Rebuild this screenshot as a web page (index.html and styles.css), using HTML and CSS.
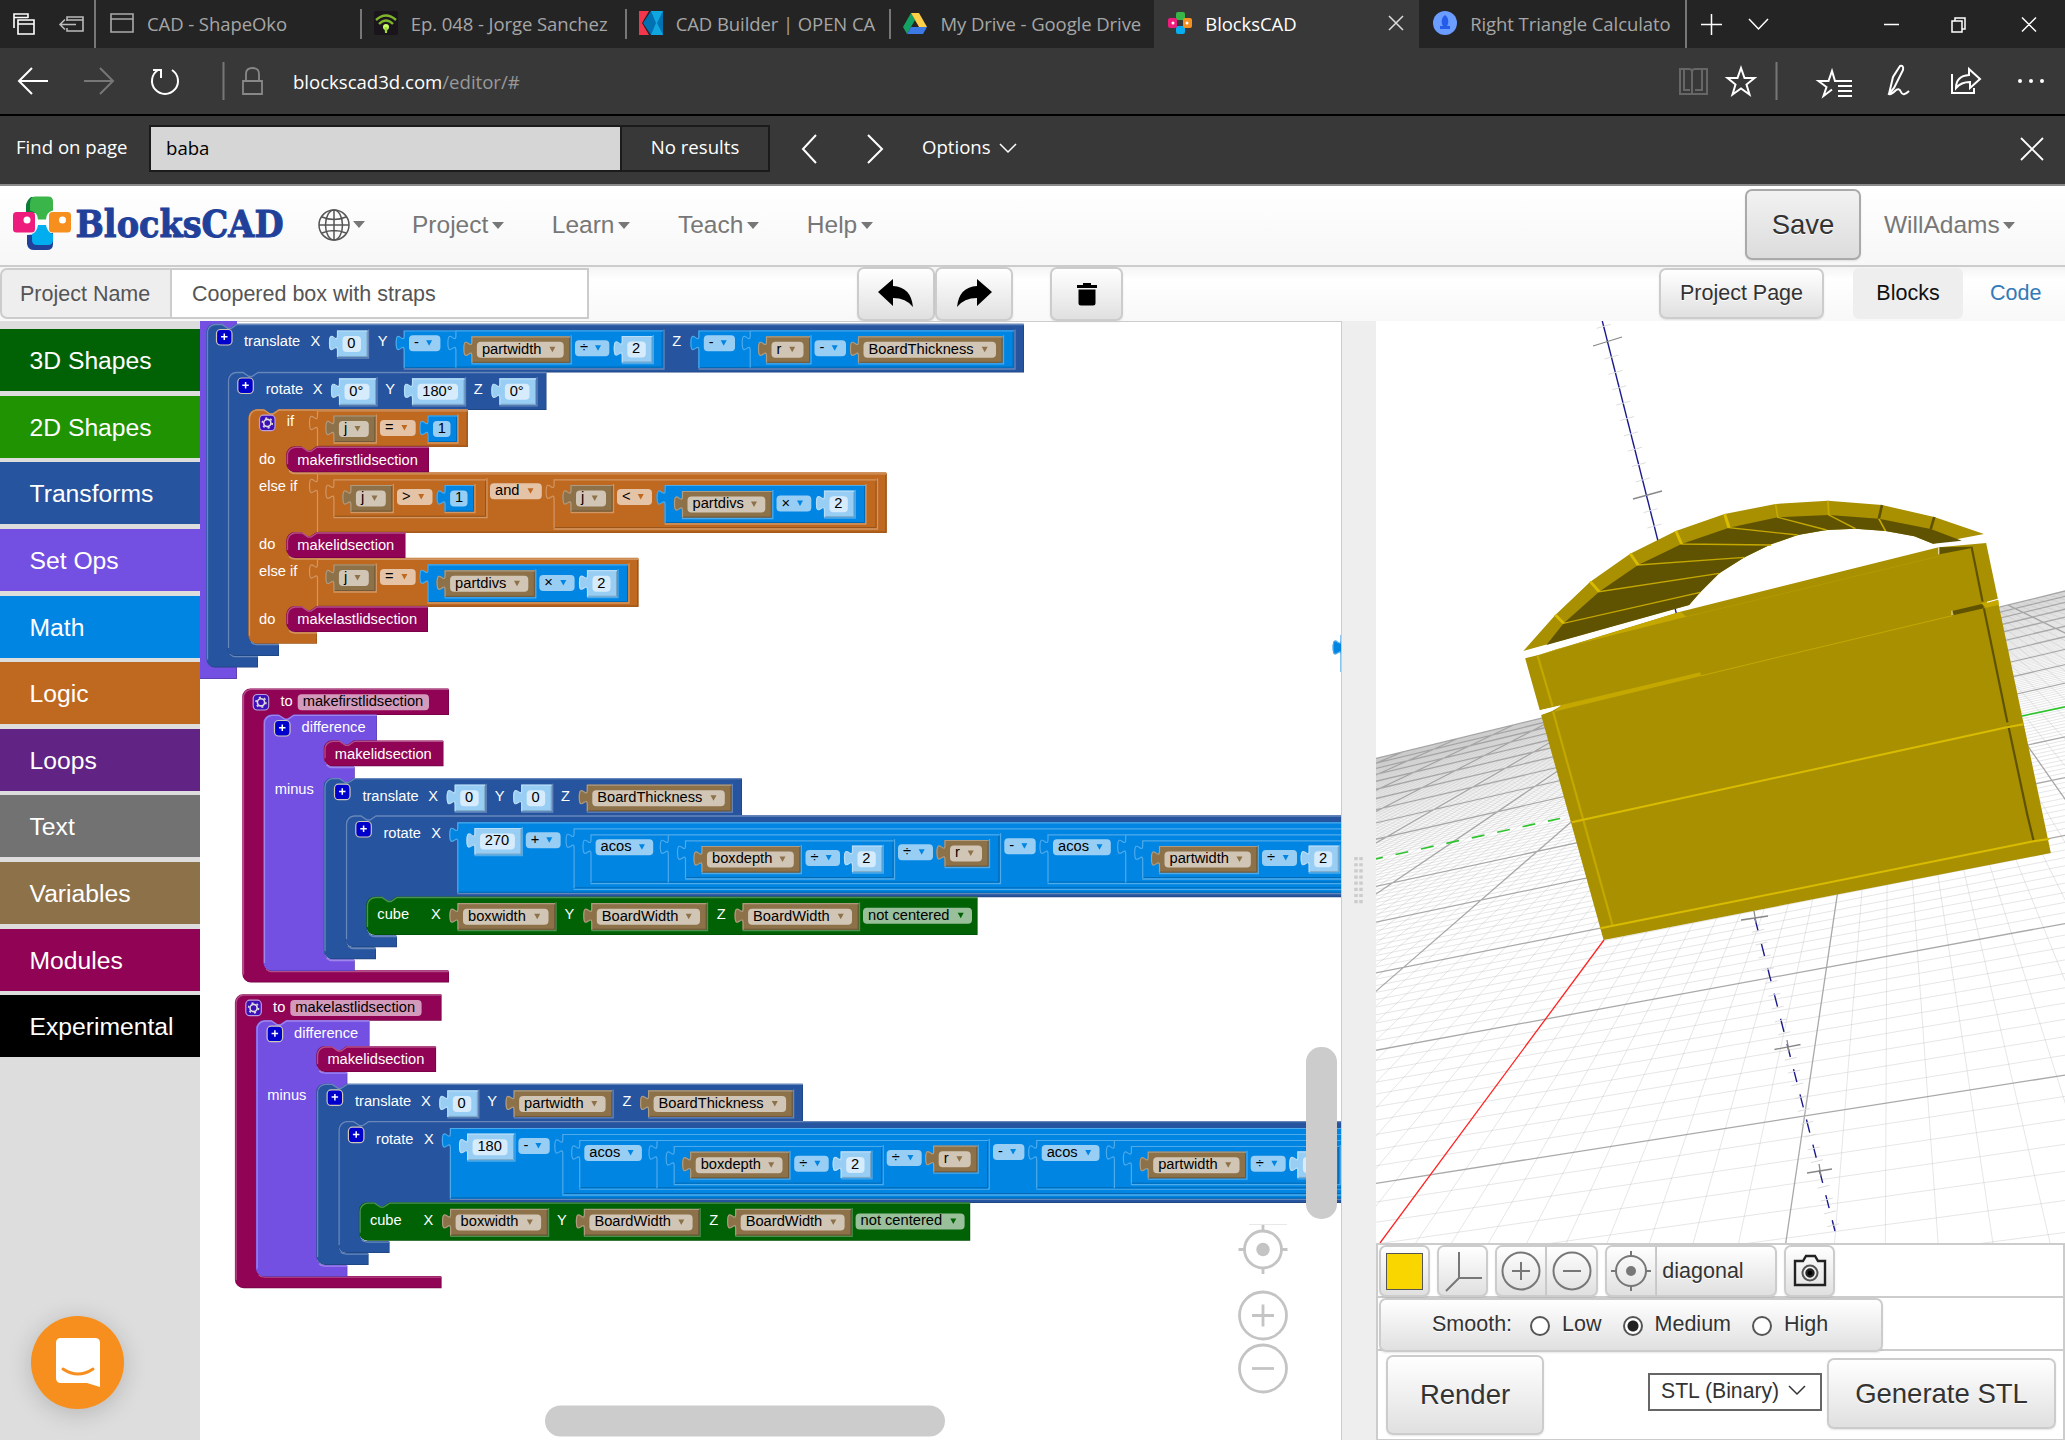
FILE: index.html
```html
<!DOCTYPE html>
<html lang="en">
<head>
<meta charset="utf-8">
<title>BlocksCAD</title>
<link rel="stylesheet" href="styles.css">
</head>
<body>
<div class="tabs">
  <div class="tab-tools">
    <svg width="95" height="48" fill="none" stroke="#fff" stroke-width="1.6"><path d="M14 28V14h14v4M14 17.500h14M18 20h16v14H18zM18 24h16" /><path d="M67 21v-4h16v14H67v-3M67 20h16M76 24.500H60m5-5l-5 5 5 5" stroke="#bbb"/></svg>
  </div>
  <div class="tab"><svg class="fav" viewBox="0 0 24 24" fill="none" stroke="#aaa" stroke-width="1.6"><path d="M1 3h22v18H1zM1 8h22"/></svg><span>CAD - ShapeOko</span></div>
  <div class="tab sep"><svg class="fav" viewBox="0 0 24 24"><rect width="24" height="24" rx="2" fill="#1a141c"/><g fill="none" stroke="#7fb52a" stroke-width="2.400"><path d="M2 9q10-9 20 0M5 13q7-7 14 0"/></g><circle cx="12" cy="16" r="3" fill="#cf6"/><path d="M10.500 16h3l-.5 6h-2z" fill="#9d3"/></svg><span>Ep. 048 - Jorge Sanchez</span></div>
  <div class="tab sep"><svg class="fav" viewBox="0 0 24 24"><path d="M0 0h10L3 12l7 12H0z" fill="#f4364c"/><path d="M12 0h12v24H12L4 12z" fill="#0071b3"/><path d="M12 0h12L18 12l6 12H12l5-12z" fill="#10a7e0"/></svg><span>CAD Builder | OPEN CA</span></div>
  <div class="tab sep"><svg class="fav" viewBox="0 0 24 24"><path d="M8 2L0 16l4 7 8-14z" fill="#13a261"/><path d="M8 2h8l8 14h-8z" fill="#ffcf48"/><path d="M8 16h16l-4 7H4z" fill="#3c78e6"/></svg><span>My Drive - Google Drive</span></div>
  <div class="tab active"><svg class="fav" viewBox="0 0 24 24"><rect x="8" y="1" width="9" height="8" rx="2" fill="#3ab54a"/><rect x="8" y="15" width="9" height="8" rx="2" fill="#08aef0"/><rect y="7" width="9" height="10" rx="2" fill="#ee1c7c"/><rect x="15" y="7" width="9" height="10" rx="2" fill="#f78f1e"/><circle cx="5" cy="12" r="1.500" fill="#fff"/><circle cx="19" cy="12" r="1.500" fill="#fff"/></svg><span>BlocksCAD</span><svg class="tab-x" viewBox="0 0 16 16" stroke="#ddd" stroke-width="1.500"><path d="M1 1l14 14M15 1L1 15"/></svg></div>
  <div class="tab"><svg class="fav" viewBox="0 0 24 24"><circle cx="12" cy="12" r="12" fill="#6b9cff"/><path d="M12 4c4 3 4 8 2 11h3v3H7v-3h3C8 12 8 7 12 4z" fill="#245be8"/></svg><span>Right Triangle Calculato</span></div>
  <div class="tab-end">
    <svg width="378" height="48" fill="none" stroke="#fff" stroke-width="1.500"><path d="M14 24.500h21M24.500 14v21M62 19l9.500 10 9.500-10M197 24.500h15M265 21h10v11h-10zM268 21v-3h10v11h-3M335 17.500l14 14M349 17.500l-14 14"/></svg>
  </div>
</div>
<div class="address">
  <svg class="nav-left" width="280" height="66" fill="none" stroke="#fff" stroke-width="2"><path d="M48 33H19M32 20L19 33l13 13"/><path d="M84 33h29M100 20l13 13-13 13" stroke="#777"/><path d="M158 22a13 13 0 1 0 14 0M153 22h8v8"/><path d="M223.500 14v38" stroke="#777"/><path d="M243 33h19v13h-19zM246 33v-7q0-6 6.500-6t6.500 6v7" stroke="#888" stroke-width="1.800"/></svg>
  <div class="url">blockscad3d.com<span>/editor/#</span></div>
  <svg class="nav-right" width="400" height="66" fill="none" stroke="#fff" stroke-width="2"><path d="M15 21h9q3 0 3 3 0-3 3-3h12v25H15zM27 24v22M19 21v21h6M37 21v21h-7" stroke="#666"/><path d="M76 20l3.500 10h10l-8 6.500 3 10-8.500-6-8.500 6 3-10-8-6.500h10z"/><path d="M111.500 14v38" stroke="#777"/><path transform="translate(3 0)" d="M180 33h-13l-3-10-3.500 10h-10l8 6-3 9 8.500-6.500M170 38h14M170 43h14M170 48h14M168 33h16"/><path transform="translate(6 0)" d="M218 46l4-17 7-11q4-1 3 4l-9 18-5 6q2 1 6-3t6 1 8-1"/><path transform="translate(4 0)" d="M283 26v19h22v-5M287 40q0-12 13-13v-6l11 10-10 9v-6q-9 0-14 6z"/><g fill="#fff" stroke="none" transform="translate(5 0)"><circle cx="350" cy="33" r="2"/><circle cx="361" cy="33" r="2"/><circle cx="372" cy="33" r="2"/></g></svg>
</div>
<div class="find">
  <span class="find-label">Find on page</span>
  <div class="find-input">baba</div>
  <div class="find-result">No results</div>
  <svg width="152" height="66" fill="none" stroke="#fff" stroke-width="2"><path d="M46 19L33 33l13 14M98 19l14 14-14 14"/></svg>
  <span class="find-options">Options</span>
  <svg width="20" height="12" fill="none" stroke="#fff" stroke-width="1.500"><path d="M1 1l8 8 8-8"/></svg>
  <svg class="find-close" width="24" height="24" stroke="#fff" stroke-width="1.800"><path d="M1 1l22 22M23 1L1 23"/></svg>
</div>

<header class="header">
  <svg class="logo" width="300" height="79" viewBox="0 0 300 79">
    <path d="M31 12q-5 4-5 9v7h10V12z" fill="#0b7a3b"/>
    <path d="M27 50v9q1 6 7 6h13q6 0 6-6V48z" fill="#21409a"/>
    <path d="M35 11.500h13q5 0 5 5v9q-7 2-7 9h-8q0-7-8-9v-7q0-7 5-7z" fill="#3ab54a"/>
    <path d="M38 40h8q1 7 7 9v6q0 5-5 5H37q-5 0-5-5v-6q5-2 6-9z" fill="#00aeef"/>
    <rect x="13" y="27" width="22" height="20.500" rx="3.500" fill="#ee1c7c"/><rect x="49" y="27" width="22" height="20.500" rx="3.500" fill="#f78f1e"/>
    <circle cx="27" cy="35" r="3.500" fill="#fff"/><circle cx="62.500" cy="35" r="3.500" fill="#fff"/>
    <text class="logo-text" x="75.500" y="51.500" textLength="208" lengthAdjust="spacingAndGlyphs">BlocksCAD</text>
  </svg>
  <svg class="globe" width="32" height="32" fill="none" stroke="#555" stroke-width="1.500"><circle cx="16" cy="16" r="15"/><ellipse cx="16" cy="16" rx="8.500" ry="15"/><path d="M16 1v30M1 16h30M4 8q12 5 24 0M4 24q12-5 24 0"/></svg><i class="caret"></i>
  <div class="menu m1">Project<i class="caret"></i></div>
  <div class="menu m2">Learn<i class="caret"></i></div>
  <div class="menu m2">Teach<i class="caret"></i></div>
  <div class="menu m2">Help<i class="caret"></i></div>
  <button class="btn save">Save</button>
  <div class="menu user">WillAdams<i class="caret"></i></div>
</header>
<div class="subbar">
  <div class="pn-label">Project Name</div><div class="pn-input">Coopered box with straps</div>
  <button class="btn undo"><svg width="40" height="32" viewBox="0 0 40 32"><path d="M2 14L17 1v7q18 1 20 21-7-9-20-9v8z"/></svg></button>
  <button class="btn redo"><svg width="40" height="32" viewBox="0 0 40 32"><path d="M38 14L23 1v7Q5 9 3 29q7-9 20-9v8z"/></svg></button>
  <button class="btn trash"><svg width="20" height="24" viewBox="0 0 20 24"><path d="M0 3h6V1h8v2h6v3H0zM1.500 7.500h17V21q0 2.500-2.500 2.500H4Q1.500 23.500 1.500 21z"/></svg></button>
  <button class="btn page">Project Page</button>
  <div class="pill">Blocks</div><div class="code">Code</div>
</div>

<main class="main">
  <aside class="toolbox">
    <div class="cat c-3d">3D Shapes</div><div class="cat c-2d">2D Shapes</div><div class="cat c-tr">Transforms</div><div class="cat c-set">Set Ops</div><div class="cat c-math">Math</div><div class="cat c-logic">Logic</div><div class="cat c-loops">Loops</div><div class="cat c-text">Text</div><div class="cat c-var">Variables</div><div class="cat c-mod">Modules</div><div class="cat c-exp">Experimental</div>
    <div class="chat"><svg width="44" height="50" viewBox="0 0 44 50"><path d="M5 0h34q5 0 5 5v44l-13-4H5q-5 0-5-5V5q0-5 5-5z" fill="#fff"/><path d="M7 31q15 10 30 0" fill="none" stroke="#f78f1e" stroke-width="3" stroke-linecap="round"/></svg></div>
  </aside>
  <svg id="workspace" class="workspace" width="1141" height="1119" viewBox="200 321 1141 1119"></svg>
  <div class="splitter"><svg width="10" height="48" viewBox="0 0 10 48" fill="none" stroke="#ccc" stroke-width="3.500" stroke-dasharray="3.200 2.950"><path d="M2 0v48M7 0v48"/></svg></div>
  <section class="viewer">
    <svg id="scene" class="scene" width="689" height="922" viewBox="1376 321 689 922"></svg>
    <div class="row tools">
      <button class="btn sq"><i class="swatch"></i></button>
      <button class="btn sq g7"><svg width="40" height="44" fill="none" stroke="#777" stroke-width="2"><path d="M16 3v26h23M16 29L3 42"/></svg></button>
      <button class="btn sq g7 l"><svg width="40" height="40" fill="none" stroke="#777" stroke-width="2"><circle cx="20" cy="20" r="18.500"/><path d="M11 20h18M20 11v18"/></svg></button>
      <button class="btn sq r"><svg width="40" height="40" fill="none" stroke="#777" stroke-width="2"><circle cx="20" cy="20" r="18.500"/><path d="M11 20h18"/></svg></button>
      <button class="btn sq g7 l"><svg width="40" height="40" fill="none" stroke="#777" stroke-width="2"><circle cx="20" cy="20" r="15"/><path d="M0 20h6M34 20h6M20 0v6M20 34v6"/><circle cx="20" cy="20" r="5" fill="#777" stroke="none"/></svg></button>
      <button class="btn diag r">diagonal</button>
      <button class="btn sq g7"><svg width="34" height="34" viewBox="0 0 34 34" fill="none" stroke="#222" stroke-width="2.400"><path d="M2 7h8l3-5h9l3 5h7v24H2z"/><circle cx="17" cy="19" r="7.500" stroke="#555" stroke-width="2"/><circle cx="17" cy="19" r="3.500" fill="#000"/></svg></button>
    </div>
    <div class="row smooth-row">
      <div class="btn smooth"><span>Smooth:</span><i class="radio"></i><span>Low</span><i class="radio on"></i><span>Medium</span><i class="radio"></i><span>High</span></div>
    </div>
    <div class="row bottom">
      <button class="btn render">Render</button>
      <div class="select">STL (Binary)<svg width="18" height="12" fill="none" stroke="#333" stroke-width="1.500"><path d="M1 1l8 8 8-8"/></svg></div>
      <button class="btn gen">Generate STL</button>
    </div>
  </section>
</main>
<script src="app.js"></script>
</body>
</html>
```
FILE: styles.css
```css
* { box-sizing: border-box; }
body { margin: 0; width: 2065px; height: 1440px; overflow: hidden; background: #fff; font-family: "Liberation Sans", Arial, sans-serif; font-size: 21.5px; color: #333; }
svg { display: block; flex: none; }
button { font-family: inherit; cursor: pointer; }

.tabs { display: flex; height: 48px; background: #242424; font-family: "Open Sans", sans-serif; font-size: 18.5px; color: #a6a6a6; letter-spacing: -.08px; }
.tab-tools { width: 96px; border-right: 2px solid #777; }
.tab { position: relative; display: flex; align-items: center; width: 265px; padding: 0 0 2px 14px; gap: 13px; }
.tab span { width: 201px; overflow: hidden; white-space: nowrap; }
.tab.sep { background: linear-gradient(#777, #777) 0 9px / 2px 30px no-repeat; }
.tab:nth-child(2) { width: 264px; }
.tab.active { background: #383838; color: #fff; width: 265px; }
.tab.active span { width: 182px; }
.tab.active + .tab { width: 266px; }
.tab-x { width: 16px; height: 16px; margin-left: -12px; }
.fav { width: 24px; height: 24px; }
.tab-end { flex: 1; border-left: 2px solid #777; }

.address { display: flex; align-items: center; height: 68px; background: #383838; border-bottom: 2px solid #000; font-family: "Open Sans", sans-serif; font-size: 18.6px; color: #fff; letter-spacing: -.02px; }
.url { padding-left: 13px; }
.url span { color: #999; }
.nav-right { margin-left: auto; }
.find { display: flex; align-items: center; height: 70px; padding-bottom: 3px; background: #383838; border-bottom: 2px solid #8a8a8a; box-shadow: 0 2px 0 #e8e8e8; font-family: "Open Sans", sans-serif; font-size: 18.6px; color: #fff; }
.find-label { width: 149px; padding: 0 0 4px 16px; }
.find-input { width: 473px; height: 47px; border: 2px solid #1b1b1b; background: #d6d6d6; color: #000; line-height: 42px; padding-left: 15px; }
.find-result { width: 148px; height: 47px; border: 2px solid #1b1b1b; border-left: 0; line-height: 39px; text-align: center; }
.find-options { width: 77px; padding-bottom: 4px; }
.find-close { margin-left: auto; margin-right: 21px; }

.header { display: flex; align-items: center; height: 81px; padding-bottom: 2px; border-bottom: 2px solid #ccc; background: linear-gradient(#fff, #f7f7f7); font-size: 24.5px; color: #777; }
.logo { overflow: visible; }
.logo-text { font: bold 38px "DejaVu Serif", serif; fill: #21409a; stroke: #21409a; stroke-width: 1; }
.globe { margin-left: 18px; }
.caret { display: inline-block; margin-left: 3px; border: 6px solid transparent; border-top: 7px solid #777; border-bottom: 0; vertical-align: 4px; }
.m1 { margin-left: 47px; }
.m1 .caret, .m2 .caret { margin-left: 4px; }
.m2 { margin-left: 47.500px; }
.btn { display: flex; align-items: center; justify-content: center; border: 2px solid #ccc; border-radius: 7px; background: linear-gradient(#fff, #e0e0e0); color: #333; font-size: 21.5px; text-shadow: 0 1px 0 #fff; box-shadow: 0 1px 2px rgba(0,0,0,.1); padding: 0; white-space: nowrap; }
.save { width: 116px; height: 71px; margin-left: auto; font-size: 27.5px; border-color: #aaa; background: linear-gradient(#f2f2f2, #dcdcdc); }
.user { margin-left: 23px; width: 181px; }

.subbar { display: flex; align-items: center; height: 54px; padding-bottom: 1px; background: linear-gradient(#f4f4f4, #fff 12px, #f8f8f8); }
.pn-label { width: 172px; height: 51px; border: 2px solid #ccc; border-radius: 7px 0 0 7px; background: #eee; line-height: 48px; padding-left: 18px; color: #555; }
.pn-input { width: 417px; height: 51px; border: 2px solid #ccc; border-left: 0; background: #fff; line-height: 48px; padding-left: 20px; color: #555; }
.undo, .redo { width: 78px; height: 54px; }
.undo { margin-left: 268px; }
.trash { width: 73px; height: 54px; margin-left: 37px; }
.page { width: 165px; height: 51px; margin-left: 536px; }
.pill { width: 110px; height: 51px; margin-left: 29px; border-radius: 6px; background: #eee; line-height: 51px; text-align: center; color: #111; }
.code { margin-left: 27px; color: #337ab7; }

.main { display: flex; height: 1119px; }
.toolbox { position: relative; width: 200px; padding-top: 8px; display: flex; flex-direction: column; gap: 4.65px; background: #ddd; }
.cat { height: 62px; line-height: 64px; padding-left: 29.5px; color: #fff; font-size: 24.7px; flex: none; }
.c-3d { background: #006205; } .c-2d { background: #209303; } .c-tr { background: #26549e; } .c-set { background: #7450e2; }
.c-math { background: #0185e3; } .c-logic { background: #bf6920; } .c-loops { background: #612485; } .c-text { background: #727272; }
.c-var { background: #8d7149; } .c-mod { background: #900355; } .c-exp { background: #000; }
.chat { position: absolute; left: 31px; top: 995px; width: 93px; height: 93px; border-radius: 50%; background: #f78f1e; display: flex; align-items: center; justify-content: center; box-shadow: 0 4px 24px rgba(0,0,0,.18); }
.workspace text { font-size: 14.67px; }
.splitter { width: 35px; border-left: 1px solid #ccc; background: #eee; display: flex; align-items: center; justify-content: center; }
.viewer { width: 689px; }
.scene { background: #fff; }
.row { display: flex; border: 2px solid #ccc; }
.tools { height: 55px; padding: 0 1px; }
.sq { width: 51px; height: 52px; }
.g7 { margin-left: 7px; }
.btn.l { border-radius: 7px 0 0 7px; width: 52px; }
.btn.r { border-radius: 0 7px 7px 0; border-left: 0; }
.diag { width: 120px; padding-right: 26px; height: 52px; }
.swatch { width: 37px; height: 37px; background: #f9d600; border: 1.500px solid #555; }
.smooth-row { height: 53px; border-top: 0; padding: 0 1px; }
.smooth { width: 504px; height: 54px; justify-content: flex-start; padding: 0 0 2px 51px; }
.radio { width: 20px; height: 20px; margin: 3px 12px 0 18px; border: 2px solid #555; border-radius: 50%; background: #fff; flex: none; }
.radio:nth-of-type(n+2) { margin-left: 21px; }
.radio.on { background: radial-gradient(#222 0 5px, #fff 6px); }
.bottom { height: 89px; border-top: 0; border-bottom-width: 1px; padding: 4px 6px; align-items: flex-start; }
.render { width: 158px; height: 80px; font-size: 27.5px; margin-left: 2px; }
.select { display: flex; align-items: center; gap: 9px; width: 174px; height: 38px; margin: 18px 0 0 104px; padding-bottom: 3px; border: 2px solid #666; background: #fff; padding-left: 11px; white-space: nowrap; font-size: 21.2px; }
.gen { width: 229px; height: 71px; font-size: 27.5px; margin: 3px 0 0 5px; }
```
FILE: app.js
```js
const C = { green: '#006205', blue: '#26549e', set: '#7450e2', math: '#0185e3', logic: '#bf6920', vars: '#8d7149', mod: '#900355', num: '#99cef4' };
const mix = (c, t, k) => '#' + [1, 3, 5].map(i => Math.round(parseInt(c.substr(i, 2), 16) * (1 - k) + t * k).toString(16).padStart(2, '0')).join('');
const light = c => mix(c, 255, .3), dark = c => mix(c, 0, .2), field = c => mix(c, 255, .6);
let out = [];
const add = s => out.push(s);

const text = (x, y, s, c = '#fff') => add(`<text x="${x}" y="${y - .4}" fill="${c}">${s}</text>`);

/* Value block: body with a puzzle tab on its left; o is the parent's colour. */
function val(x, y, r, b, c, o) {
  const tab = `V${y + 20}c0,-10 -8,8 -8,-7.5s8,2.5 8,-7.5`;
  const body = `M${x} ${y}H${r}V${b}H${x}${tab}Z`;
  if (o) add(`<path d="M${x} ${b + 1}H${r + 1}V${y - 1}" fill="none" stroke="${light(o)}" stroke-width="1.3"/>`);
  add(`<path d="${body}" fill="${c}"/><path d="M${x + 1} ${b - .5}H${r - .5}V${y + 1}" fill="none" stroke="${dark(c)}"/>`);
  add(`<path d="M${x + .5} ${b}${tab}V${y + .5}H${r}" fill="none" stroke="${light(c)}" stroke-width="1.2"/>`);
}
function box(x, y, r, s, c, cx, h = 16) {
  add(`<rect x="${x}" y="${y}" width="${r - x}" height="${h}" rx="4" fill="${field(c)}"/>`);
  text(cx ?? x + 5, y + 12.3, s, '#000');
}
function drop(x, y, r, s, c) {
  box(x, y, r, s, c);
  const a = r - 11.3, t = y + 5;
  add(`<path d="M${a - 3} ${t}h6l-3 5.500z" fill="${c}"/>`);
}
function variable(x, y, r, s, o = C.math) {
  val(x, y, r, y + 26.5, C.vars, o);
  drop(x + 5.5, y + 5.5, r - 6.5, s, C.vars);
}
function num(x, y, r, s, c = C.num, o = C.math) {
  val(x, y, r, y + 26.5, c, o);
  add(`<rect x="${x + 5.5}" y="${y + 5.5}" width="${r - x - 12}" height="16" rx="4" fill="${field(c)}"/>`);
  text(x + 10.3, y + 17.8, s, '#000');
}
/* Statement block. rows: {r,b} plain row, {s,b} statement mouth starting at x=s. */
function stmt(x, y, rows, c, notch = true) {
  const top = `A8 8 0 0 1 ${x + 8} ${y}` + (notch ? `H${x + 15}l6 4h3l6-4` : '') + `H${rows[0].r}`;
  const end = rows[rows.length - 1].b;
  let d = `M${x} ${y + 8}${top}V${rows[0].b}`, hl = '';
  for (let i = 1; i < rows.length; i++) {
    const q = rows[i];
    if (q.s) {
      d += `H${q.s + 30}l-6 5h-3l-6-5H${q.s + 8}a8 8 0 0 0 -8 8V${q.b - 8}a8 8 0 0 0 8 8`;
      hl += `M${q.s + 2} ${q.b - 2}a8 8 0 0 0 6 2.5H${rows[i + 1].r}`;
    } else d += `H${q.r}V${q.b}`;
  }
  d += `H${x + 8}a8 8 0 0 1 -8-8Z`;
  add(`<path d="${d}" fill="${dark(c)}"/><path d="${d}" fill="${c}" transform="translate(-.7 -.7)"/>`);
  add(`<path d="M${x + .5} ${end - 8}V${y + 8}${top}${hl}" fill="none" stroke="${light(c)}" stroke-width="1.3"/>`);
}
function icon(x, y, gear) {
  add(`<rect x="${x + .5}" y="${y + .5}" width="15.500" height="15.500" rx="4" fill="${gear ? '#3d0fb8' : '#00c'}" stroke="${gear ? '#b9a0dc' : '#cfc8b8'}" stroke-width="1.200"/>`);
  add(gear ? `<circle cx="${x + 8.3}" cy="${y + 8.3}" r="3.600" fill="none" stroke="#ddd" stroke-width="1.600"/><circle cx="${x + 8.3}" cy="${y + 8.3}" r="5" fill="none" stroke="#ddd" stroke-width="1.500" stroke-dasharray="2 3.200"/>`
    : `<path d="M${x + 8.3} ${y + 4.5}v6.500M${x + 5} ${y + 7.700}h6.500" stroke="#fff" stroke-width="1.500"/>`);
}
function call(x, y, r, s) { stmt(x, y, [{ r, b: y + 25 }], C.mod); text(x + 10.3, y + 17.8, s); }

/* First stack */
add(`<path d="M200 321h37v358h-37z" fill="${C.set}"/><path d="M200 678.500h36.500V668" fill="none" stroke="${dark(C.set)}"/>`);
stmt(207, 324.5, [{ r: 1024, b: 372.5 }, { s: 228, b: 656 }, { r: 258, b: 667.5 }], C.blue);
icon(216, 329); text(244, 346.7, 'translate'); text(310.5, 346.7, 'X'); text(377.7, 346.7, 'Y'); text(672.3, 346.7, 'Z');
num(337, 330.5, 367.5, '0', C.num, C.blue);
val(403.7, 330.5, 663, 368, C.math, C.blue); drop(409, 335.3, 440.4, '-', C.math);
val(455.4, 330.5, 662.5, 367.5, C.math);
variable(471.4, 336.3, 570.2, 'partwidth'); drop(575, 340.3, 609.3, '÷', C.math); num(621.8, 336, 652.3, '2');
val(698.4, 330.5, 1014, 368, C.math, C.blue); drop(703.8, 335.3, 735, '-', C.math);
val(749.7, 330.5, 1013.5, 367.5, C.math);
variable(766, 336.3, 810, 'r'); drop(814.5, 340.3, 846, '-', C.math); variable(858, 336.3, 1002.5, 'BoardThickness');

stmt(228, 372.5, [{ r: 546.5, b: 410 }, { s: 249, b: 644 }, { r: 279, b: 656 }], C.blue);
icon(237.3, 377.5); text(265.7, 394.7, 'rotate'); text(312.7, 394.7, 'X'); text(385.2, 394.7, 'Y'); text(473.8, 394.7, 'Z');
num(339, 378.3, 376, '0°', C.num, C.blue); num(412, 378.3, 464.5, '180°', C.num, C.blue); num(499.4, 378.3, 536, '0°', C.num, C.blue);

stmt(249, 410, [{ r: 468, b: 447 }, { s: 287, b: 473 }, { r: 886.8, b: 533 }, { s: 287, b: 558.5 }, { r: 638.6, b: 607 }, { s: 287, b: 632.5 }, { r: 317, b: 643.7 }], C.logic);
icon(259, 414.700, true);
text(286.8, 426.7, 'if'); text(259, 464.3, 'do'); text(259, 491, 'else if'); text(259, 549.3, 'do'); text(259, 576, 'else if'); text(259, 624.3, 'do');
val(317, 410.5, 467.5, 446.5, C.logic);
variable(333.4, 415.5, 375.3, 'j', C.logic); drop(380, 420, 415.700, '=', C.logic); num(427.500, 415.5, 457, '1', C.math, C.logic);
val(317, 473.5, 886.3, 532.5, C.logic);
val(333.4, 479.3, 486, 516.700, C.logic, C.logic);
variable(350.4, 485, 392.3, 'j', C.logic); drop(397, 489, 432.5, '&gt;', C.logic); num(444.6, 485, 474, '1', C.math, C.logic);
drop(490, 483.3, 541.8, 'and', C.logic);
val(553.6, 479.3, 876.5, 528, C.logic, C.logic);
variable(570.5, 485, 612.5, 'j', C.logic); drop(617, 489, 652, '&lt;', C.logic);
val(664.6, 485, 865, 523, C.math, C.logic);
variable(682, 491, 771.8, 'partdivs'); drop(776.5, 495.6, 811.3, '×', C.math); num(824, 490.7, 854.3, '2');
val(317, 559, 638.1, 606.5, C.logic);
variable(333.4, 564.5, 375.3, 'j', C.logic); drop(380, 569, 415.7, '=', C.logic);
val(427.5, 564.3, 628, 602, C.math, C.logic);
variable(444.6, 570.3, 534.8, 'partdivs'); drop(539.3, 575, 574.6, '×', C.math); num(587, 570.2, 617, '2');
call(287, 447.3, 429, 'makefirstlidsection'); call(287, 533, 405.5, 'makelidsection'); call(287, 607, 428, 'makelastlidsection');
val(1340.700, 635, 1400, 672, C.math);

/* Lid section modules: same stack, shifted; `last` selects the second variant. */
function module(dx, dy, last) {
  const X = v => +(v + dx).toFixed(1), Y = v => +(v + dy).toFixed(1);
  stmt(X(243), Y(689.3), [{ r: X(449), b: Y(715) }, { s: X(264), b: Y(971) }, { r: X(449), b: Y(982.5) }], C.mod, false);
  icon(X(252.7), Y(694), true); text(X(280.5), Y(706.7), 'to');
  box(X(297.7), Y(694.3), X(429), last ? 'makelastlidsection' : 'makefirstlidsection', C.mod);
  stmt(X(264), Y(715.3), [{ r: X(377), b: Y(741) }, { s: X(324.5), b: Y(767) }, { r: X(354.8), b: Y(778.7) }, { s: X(324.5), b: Y(960) }, { r: X(354.8), b: Y(971) }], C.set);
  icon(X(274), Y(720)); text(X(301.5), Y(732.7), 'difference'); text(X(274.7), Y(794.7), 'minus');
  call(X(324.5), Y(741.3), X(443.5), 'makelidsection');
  stmt(X(324.5), Y(778.700), [{ r: last ? 803 : 742, b: Y(816) }, { s: X(346), b: Y(948) }, { r: X(376), b: Y(959.3) }], C.blue);
  icon(X(334), Y(783.700)); text(X(362.4), Y(801), 'translate'); text(X(428.3), Y(801), 'X');
  num(X(454.700), Y(784.7), X(485.2), '0', C.num, C.blue); text(X(494.7), Y(801), 'Y');
  if (last) {
    variable(X(521), Y(784.7), X(619.5), 'partwidth', C.blue); text(X(630), Y(801), 'Z'); variable(X(655.5), Y(784.7), X(800), 'BoardThickness', C.blue);
  } else {
    num(521.2, 784.7, 551.7, '0', C.num, C.blue); text(561, 801, 'Z'); variable(586.8, 784.7, 731.3, 'BoardThickness', C.blue);
  }
  stmt(X(346), Y(816), [{ r: 1400, b: Y(897.3) }, { s: X(367), b: Y(936) }, { r: X(397), b: Y(947.3) }], C.blue);
  icon(X(355.3), Y(821)); text(X(383.4), Y(838.7), 'rotate'); text(X(431.3), Y(838.7), 'X');
  val(X(457.3), Y(822.3), 1390, Y(892.7), C.math, C.blue);
  num(X(474.500), Y(828), X(521.4), last ? '180' : '270');
  drop(X(525.8), Y(832.3), last ? 549.700 : 560.600, last ? '-' : '+', C.math);
  dx = last ? -11.3 : 0;
  val(X(573.6), Y(828.3), 1380, Y(888.3), C.math, C.math);
  val(X(590.5), Y(834.3), X(999.5), Y(882.500), C.math, C.math);
  drop(X(595.6), Y(839.2), X(653.2), 'acos', C.math);
  val(X(667.8), Y(834.3), X(999.3), Y(882.500), C.math);
  val(X(685), Y(840.3), X(893.5), Y(878), C.math, C.math);
  variable(X(701.5), Y(846), X(800.3), 'boxdepth'); drop(X(805.5), Y(850), X(840), '÷', C.math); num(X(852), Y(845.7), X(882.3), '2');
  drop(X(898), Y(844.3), X(933), '÷', C.math); variable(X(944.500), Y(840), X(988.5), 'r');
  drop(X(1004.3), Y(838.300), X(1035.7), '-', C.math);
  val(X(1047.5), Y(834.3), 1370, Y(882.500), C.math, C.math); drop(X(1053), Y(839.2), X(1110.8), 'acos', C.math);
  val(X(1125.2), Y(834.3), 1369, Y(882.500), C.math);
  val(X(1142.2), Y(840.3), X(1350.500), Y(878), C.math, C.math);
  variable(X(1159), Y(846), X(1257.3), 'partwidth'); drop(X(1262), Y(850), X(1297), '÷', C.math); num(X(1308.7), Y(845.7), X(1338.700), '2');
  dx = last ? -7.4 : 0;
  stmt(X(367), Y(897.5), [{ r: X(977.6), b: Y(935) }], C.green);
  text(X(377.3), Y(919.7), 'cube'); text(X(431), Y(919.7), 'X'); text(X(564.5), Y(919.7), 'Y'); text(X(716.7), Y(919.7), 'Z');
  variable(X(457.5), Y(903.2), X(555), 'boxwidth', C.green); variable(X(591.3), Y(903.2), X(706.5), 'BoardWidth', C.green); variable(X(742.6), Y(903.2), X(858.500), 'BoardWidth', C.green);
  drop(X(863), Y(907.7), X(972), 'not centered', C.green);
}
module(0, 0, false);
module(-7.4, 305.7, true);

/* Scrollbars and zoom controls */
add(`<rect x="1306" y="1047" width="31" height="172" rx="15" fill="#ccc"/><rect x="545" y="1405.500" width="400" height="31" rx="15.500" fill="#ccc"/>`);
add(`<g fill="none" stroke="#c4c4c4" stroke-width="2.800"><circle cx="1263" cy="1249.500" r="18.500"/><path d="M1238.500 1249.500h6M1281.500 1249.500h6M1263 1225v6M1263 1268v6"/><circle cx="1263" cy="1249.500" r="6.700" fill="#c4c4c4" stroke="none"/><circle cx="1263" cy="1315.500" r="23.500"/><path d="M1252 1315.500h22M1263 1304.500v22"/><circle cx="1263" cy="1368.500" r="23.500"/><path d="M1252 1368.500h22"/></g><path d="M1249 1224.500h38" stroke="#e8e8e8"/>`);
add('<path d="M237 321.500H1341" stroke="#ccc"/>');
document.getElementById('workspace').innerHTML = out.join('');

/* 3D scene: the ground grid is projected through a plane homography. */
out = [];
function homography(pairs) {
  const m = [];
  for (const [X, Y, u, v] of pairs) {
    m.push([X, Y, 1, 0, 0, 0, -u * X, -u * Y, u], [0, 0, 0, X, Y, 1, -v * X, -v * Y, v]);
  }
  for (let i = 0; i < 8; i++) {
    let p = i;
    for (let r = i; r < 8; r++) if (Math.abs(m[r][i]) > Math.abs(m[p][i])) p = r;
    [m[i], m[p]] = [m[p], m[i]];
    for (let r = 0; r < 8; r++) if (r !== i) {
      const f = m[r][i] / m[i][i];
      for (let k = i; k < 9; k++) m[r][k] -= f * m[i][k];
    }
  }
  return m.map((r, i) => r[8] / r[i]);
}
const H = homography([[0, -1, 1580, 814.4], [0, 2, 2009, 719], [5, 0, 1430.8, 1174.7], [5, 1, 1804.5, 1116]]);
const W = (X, Y) => H[6] * X + H[7] * Y + 1;
const P = (X, Y) => [(H[0] * X + H[1] * Y + H[2]) / W(X, Y), (H[3] * X + H[4] * Y + H[5]) / W(X, Y)].map(v => v.toFixed(1)).join(' ');
function seg(a, b) {
  const wa = W(...a), wb = W(...b), e = .12;
  if (wa < e && wb < e) return '';
  const at = () => { const t = (e - wa) / (wb - wa); return [a[0] + (b[0] - a[0]) * t, a[1] + (b[1] - a[1]) * t]; };
  if (wa < e) a = at(); else if (wb < e) b = at();
  return `M${P(...a)}L${P(...b)}`;
}
let minor = '', major = '';
const N = 10;
for (let i = -N * 10; i <= N * 10; i++) {
  const k = i / 10, d = seg([k, -N], [k, N]) + seg([-N, k], [N, k]);
  if (i % 10) minor += d; else if (i) major += d;
}
add(`<path d="${minor}" stroke="#bbb" stroke-opacity=".36" fill="none"/><path d="${major}" stroke="#9a9a9a" stroke-width="1.300" fill="none" stroke-opacity=".85"/>`);
add('<path d="M1376 858.800L1560 818.500" stroke="#2fc42f" stroke-width="1.700" stroke-dasharray="13 13" stroke-dashoffset="6"/><path d="M2020 716.500L2065 706.800" stroke="#2fc42f" stroke-width="1.700"/><path d="M1604 940L1380 1243" stroke="#f22" stroke-width="1.300"/>');
add('<path d="M1602.300 321L1677 616" stroke="#1a1a8c" stroke-width="1.400"/><path d="M1754.800 918L1835 1231" stroke="#1a1a8c" stroke-width="1.400" stroke-dasharray="13.500 12.500"/>');
let ticks = '';
for (let i = -1; i < 13; i++) {
  const y = 341.7 + i * 15.36, x = 1607.6 + i * 3.9;
  if (i % 10) ticks += `M${x - 7} ${y + 2}l14-4`;
}
for (let i = 0; i < 25; i++) { const y = 918 + i * 12.8, x = 1754.8 + i * 3.27; if (i % 10) ticks += `M${x - 6} ${y + 1.5}l12-3`; }
add(`<path d="${ticks}" stroke="#ddd"/><path d="M1593 346l29-9M1633 499l29-8M1741 920l27-4M1774.500 1049.500l26-5M1807 1173l25-4M1754 911l2 12M1787 1040l2 12M1819 1164l2 12" stroke="#888" stroke-width="1.300"/>`);

const D = '#5f5200', B = '#a89000', L = '#c4a800';
const poly = (p, c) => add(`<polygon points="${p}" fill="${c}"/>`);
const line = (d, c, w) => add(`<path d="${d}" stroke="${c}" stroke-width="${w}" fill="none"/>`);
add('<g transform="translate(1370 315) scale(.44326 .33333)">');
poly('346,1008 418,900 497,800 587,716 690,648 800,597 915,567 1033,557 1155,570 1273,606 1385,657 1270,686 1228,664 1163,648 1095,641 1030,645 965,660 905,688 845,727 788,775 745,832 720,870', B);
poly('398,990 437,925 517,830 605,750 703,687 810,638 920,607 1035,600 1148,611 1265,642 1335,677 1270,686 1228,664 1163,648 1095,641 1030,645 965,660 905,688 845,727 788,775 745,832 720,870', D);
line('M418 900L437 925 745 832M497 800L517 830 788 775M587 716L605 750 845 727M690 648L703 687 905 690M800 597L810 638 965 660M915 567L920 607 1030 645M1033 557L1035 600 1095 641M1148 611L1163 648', L, 4);
line('M418 900L437 925M497 800L517 830M587 716L605 750M690 648L703 687M800 597L810 638', '#d9bb00', 7);
line('M1155 570L1148 611M1273 606L1265 642', D, 6);
poly('350,1030 380,1020 700,890 1283,697 1390,684 1417,855 1418,868 1474,1222 1536,1614 527,1875 386,1200 410,1188 432,1172 383,1186', B);
poly('383,1186 432,1170 410,1188 386,1199', '#fff');
poly('378,1022 700,890 714,905 420,1003', L);
poly('432,1170 745,1072 747,1083 415,1190', L);
line('M747 1082L1313 902', L, 3);
line('M714 905L1283 724', L, 1);
poly('1285,697 1357,695 1355,700 1285,718', D);
poly('1313,888 1383,866 1385,880 1318,900', D);
line('M1283 697V718M1313 887V900', '#fff', 2);
line('M1357 695L1382 860M1385 880L1438 1222M1440 1232L1483 1500 1497 1577', D, 5);
poly('1378,864 1417,855 1419,869 1390,878', L);
line('M1392 862L1425 850', '#fff', 3);
line('M378 1022L412 1174M413 1190L478 1500 547 1830', L, 5);
line('M455 1522L530 1500 1437 1237 1474 1228', '#d9bb00', 6);
line('M520 1840L1497 1579 1532 1572', '#d9bb00', 6);
add('</g>');
document.getElementById('scene').innerHTML = out.join('');
```
